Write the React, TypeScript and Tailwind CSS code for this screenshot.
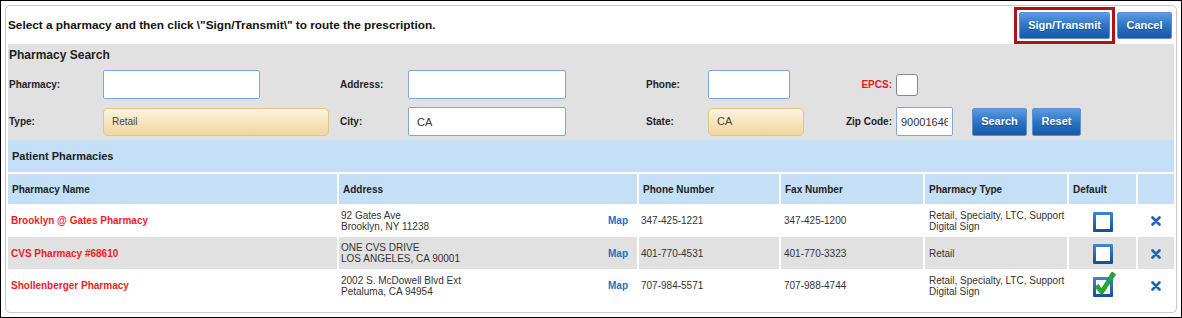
import React from 'react';

type Pharmacy = {
  name: string;
  address: [string, string];
  phone: string;
  fax: string;
  type: [string, string?];
  isDefault: boolean;
};

const pharmacies: Pharmacy[] = [
  {
    name: 'Brooklyn @ Gates Pharmacy',
    address: ['92 Gates Ave', 'Brooklyn, NY 11238'],
    phone: '347-425-1221',
    fax: '347-425-1200',
    type: ['Retail, Specialty, LTC, Support', 'Digital Sign'],
    isDefault: false,
  },
  {
    name: 'CVS Pharmacy #68610',
    address: ['ONE CVS DRIVE', 'LOS ANGELES, CA 90001'],
    phone: '401-770-4531',
    fax: '401-770-3323',
    type: ['Retail'],
    isDefault: false,
  },
  {
    name: 'Shollenberger Pharmacy',
    address: ['2002 S. McDowell Blvd Ext', 'Petaluma, CA 94954'],
    phone: '707-984-5571',
    fax: '707-988-4744',
    type: ['Retail, Specialty, LTC, Support', 'Digital Sign'],
    isDefault: true,
  },
];

const btn =
  'h-[27px] rounded-[2px] border border-[#5a93cf] bg-gradient-to-b from-[#5c9be0] via-[#2c74c6] to-[#1859a8] text-white text-[11px] font-bold [text-shadow:0_1px_1px_rgba(0,0,0,0.35)]';
const input = 'h-[29px] border border-[#7ea8d8] rounded-[2px] bg-white px-2 text-[11px] text-[#333]';
const select =
  'h-[28px] rounded-[5px] border border-[#e2c487] bg-gradient-to-b from-[#fcf3de] to-[#f1d69e] px-2 flex items-center text-[10px] text-[#444]';
const label = 'text-[10px] font-bold text-[#222]';

function DefaultBox({ checked }: { checked: boolean }) {
  return (
    <svg width="24" height="24" viewBox="0 0 24 24" className="overflow-visible">
      <defs>
        <linearGradient id="boxg" x1="0" y1="0" x2="0" y2="1">
          <stop offset="0" stopColor="#3d86d6" />
          <stop offset="1" stopColor="#114f9e" />
        </linearGradient>
      </defs>
      <rect x="2" y="3" width="20" height="20" fill="url(#boxg)" rx="1" />
      <rect x="5" y="6" width="14" height="14" fill="#fff" />
      {checked && (
        <path
          d="M4 13 L7.5 10.5 L10.5 15 L21 -2 L24.5 0.5 L11 21 Z"
          fill="#22a83a"
          stroke="#178a2e"
          strokeWidth="0.8"
          strokeLinejoin="round"
        />
      )}
    </svg>
  );
}

function RemoveIcon() {
  return (
    <svg width="10" height="10" viewBox="0 0 10 10">
      <path d="M1.5 1.5 L8.5 8.5 M8.5 1.5 L1.5 8.5" stroke="#1e63b5" strokeWidth="2.6" strokeLinecap="round" />
    </svg>
  );
}

export default function App() {
  return (
    <div className="w-[1182px] h-[318px] border border-black bg-white p-[4px] font-['Liberation_Sans',Arial,sans-serif]">
      <div className="h-[308px] rounded-[5px] border border-[#c8c8c8] bg-white px-[2px]">
        {/* Title bar */}
        <div className="flex h-[38px] items-center justify-between">
          <p className="pt-[1px] text-[11.8px] font-bold text-[#111]">
            Select a pharmacy and then click \"Sign/Transmit\" to route the prescription.
          </p>
          <div className="flex items-center gap-[2px] pr-[2px] pt-[1px]">
            <div className="border-[3px] border-[#b0121b] p-[2px]">
              <button className={`${btn} w-[91px]`}>Sign/Transmit</button>
            </div>
            <button className={`${btn} w-[55px]`}>Cancel</button>
          </div>
        </div>

        {/* Pharmacy Search */}
        <div className="bg-[#e1e1e1] px-[1px] pt-[4px] pb-[4px]">
          <h2 className="text-[12px] font-bold text-[#222] leading-[15px] mb-[7px]">Pharmacy Search</h2>
          <div className="grid grid-cols-[94px_237px_68px_238px_62px_188px_1fr] items-center gap-y-[8px]">
            <span className={label}>Pharmacy:</span>
            <div><input className={`${input} w-[157px]`} /></div>
            <span className={label}>Address:</span>
            <div><input className={`${input} w-[158px]`} /></div>
            <span className={label}>Phone:</span>
            <div className="flex items-center justify-between pr-[4px]">
              <input className={`${input} w-[82px]`} />
              <span className="text-[10px] font-bold text-[#e21b1b]">EPCS:</span>
            </div>
            <div>
              <div className="h-[22px] w-[22px] rounded-[3px] border border-[#888] bg-white" />
            </div>

            <span className={label}>Type:</span>
            <div className={`${select} w-[226px]`}>Retail</div>
            <span className={label}>City:</span>
            <div><input className={`${input} w-[158px] h-[28px]`} defaultValue="CA" /></div>
            <span className={label}>State:</span>
            <div className="flex items-center justify-between pr-[4px]">
              <div className={`${select} w-[96px] text-[11px]`}>CA</div>
              <span className={label}>Zip Code:</span>
            </div>
            <div className="flex items-center">
              <input className={`${input} w-[57px] h-[28px] px-[4px] text-[10px]`} defaultValue="900016465" />
              <button className={`${btn} ml-[19px] w-[55px] h-[28px]`}>Search</button>
              <button className={`${btn} ml-[5px] w-[49px] h-[28px]`}>Reset</button>
            </div>
          </div>
        </div>

        {/* Patient Pharmacies */}
        <table className="w-[1166px] table-fixed border-collapse text-[10px] text-[#333]">
          <colgroup>
            <col className="w-[330px]" />
            <col className="w-[300px]" />
            <col className="w-[142px]" />
            <col className="w-[144px]" />
            <col className="w-[144px]" />
            <col className="w-[69px]" />
            <col className="w-[37px]" />
          </colgroup>
          <thead>
            <tr className="h-[33px] bg-[#c5dff7] border-b-2 border-white">
              <th colSpan={7} className="text-left pl-[4px] text-[11px] font-bold text-[#222]">
                Patient Pharmacies
              </th>
            </tr>
            <tr className="h-[31px] bg-[#c5dff7]">
              {['Pharmacy Name', 'Address', 'Phone Number', 'Fax Number', 'Pharmacy Type', 'Default', ''].map((h, i) => (
                <th
                  key={i}
                  className="border-x-2 border-white first:border-l-0 last:border-r-0 text-left pl-[4px] font-bold text-[#222]"
                >
                  {h}
                </th>
              ))}
            </tr>
          </thead>
          <tbody>
            {pharmacies.map((p, i) => (
              <tr key={p.name} className={`${i === 1 ? 'h-[32px] bg-[#e1e1e1]' : 'h-[33px] bg-white'}`}>
                <td className="pl-[3px] font-bold text-[#ee1c1c] border-r-2 border-white">{p.name}</td>
                <td className="pl-[2px] border-x-2 border-white leading-[11px]">
                  <div className="flex items-center justify-between pr-[9px]">
                    <div>
                      <div>{p.address[0]}</div>
                      <div>{p.address[1]}</div>
                    </div>
                    <span className="font-bold text-[#1b6fc8]">Map</span>
                  </div>
                </td>
                <td className="pl-[2px] border-x-2 border-white">{p.phone}</td>
                <td className="pl-[3px] border-x-2 border-white">{p.fax}</td>
                <td className="pl-[4px] border-x-2 border-white leading-[11px]">
                  <div>{p.type[0]}</div>
                  {p.type[1] && <div>{p.type[1]}</div>}
                </td>
                <td className="border-x-2 border-white">
                  <div className="flex justify-center">
                    <DefaultBox checked={p.isDefault} />
                  </div>
                </td>
                <td className="border-l-2 border-white">
                  <div className="flex justify-center pt-[1px]">
                    <RemoveIcon />
                  </div>
                </td>
              </tr>
            ))}
          </tbody>
        </table>
      </div>
    </div>
  );
}
